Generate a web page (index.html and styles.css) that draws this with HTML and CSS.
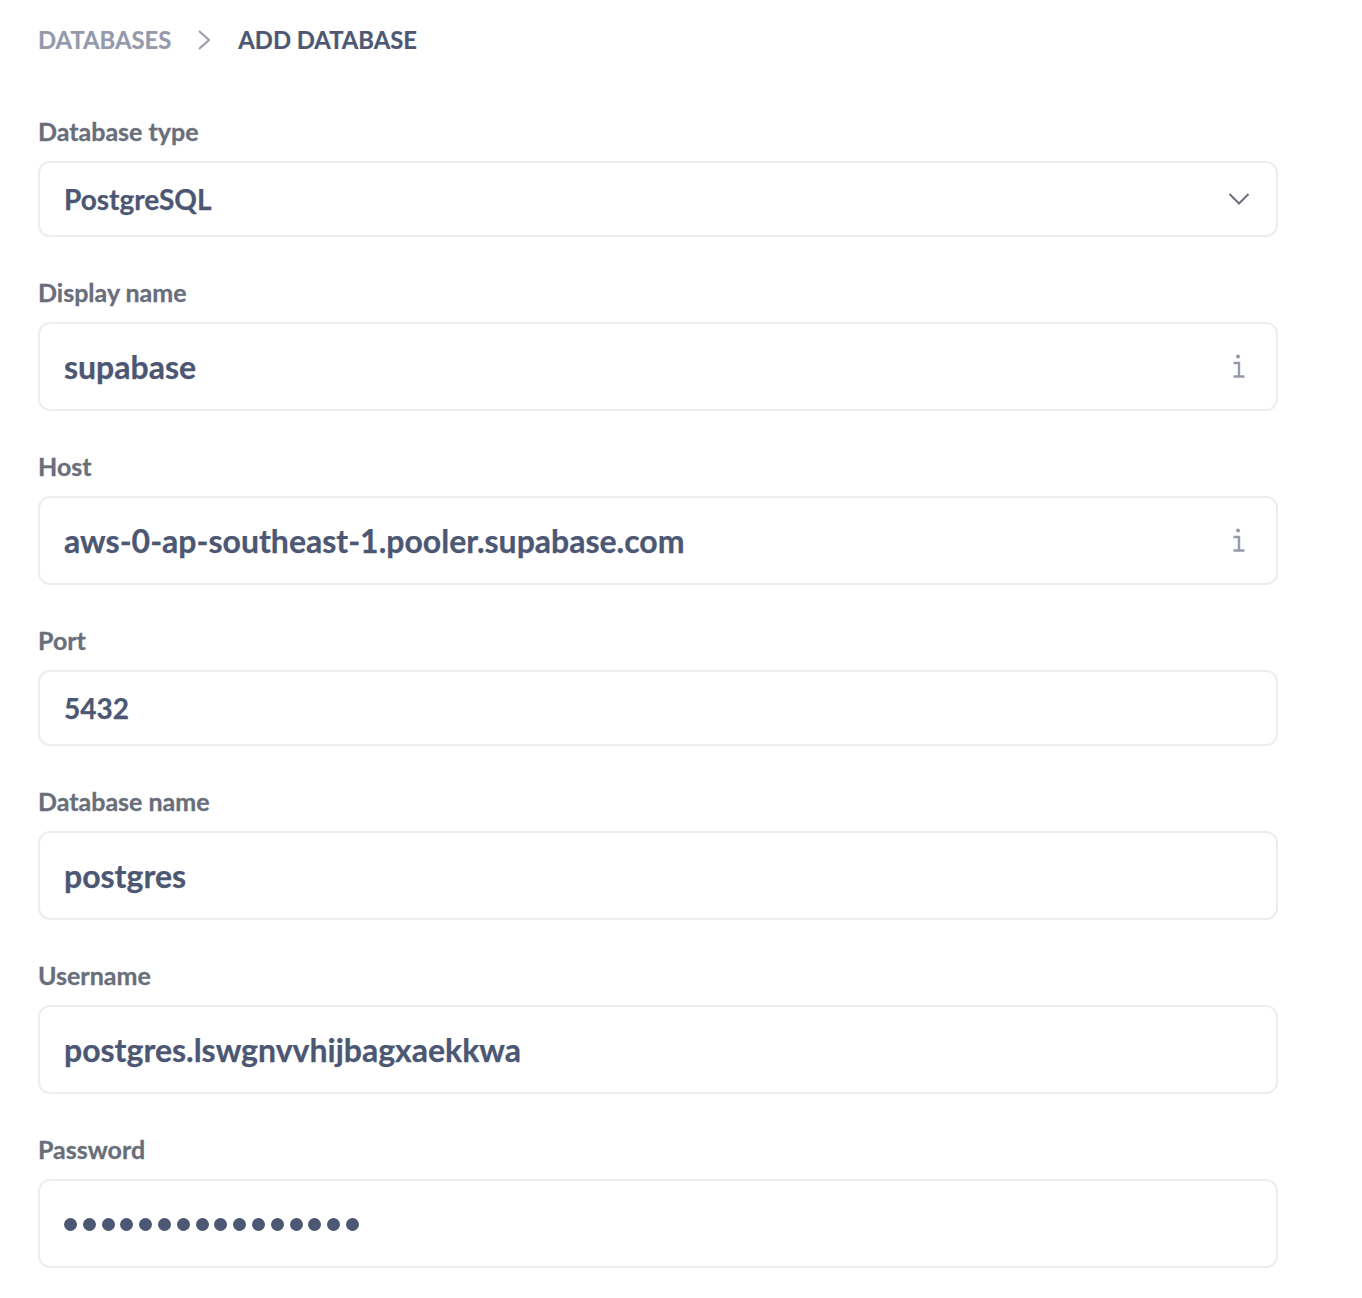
FILE: index.html
```html
<!DOCTYPE html>
<html>
<head>
<meta charset="utf-8">
<link rel="stylesheet" href="styles.css">
</head>
<body>
<div class="page">
  <nav class="crumbs">
    <span class="crumb-link">DATABASES</span>
    <svg class="crumb-sep" width="14" height="22" viewBox="0 0 14 22"><path d="M2 2 L12 11 L2 20" fill="none" stroke="#949aab" stroke-width="2"/></svg>
    <span class="crumb-current">ADD DATABASE</span>
  </nav>

  <form class="form">
    <div class="field">
      <div class="label">Database type</div>
      <div class="box short">
        <span class="value">PostgreSQL</span>
        <svg class="chevron" width="22" height="14" viewBox="0 0 22 14"><path d="M1.5 2 L11 11.5 L20.5 2" fill="none" stroke="#696e7b" stroke-width="2"/></svg>
      </div>
    </div>

    <div class="field">
      <div class="label">Display name</div>
      <div class="box tall">
        <span class="value big">supabase</span>
        <svg class="info" width="14" height="26" viewBox="0 0 14 26"><circle cx="6" cy="2.5" r="2" fill="#949aab"/><path d="M1.5 9 H7 V22 M1.5 22.5 H12.5" fill="none" stroke="#949aab" stroke-width="2.4"/></svg>
      </div>
    </div>

    <div class="field">
      <div class="label">Host</div>
      <div class="box tall">
        <span class="value big">aws-0-ap-southeast-1.pooler.supabase.com</span>
        <svg class="info" width="14" height="26" viewBox="0 0 14 26"><circle cx="6" cy="2.5" r="2" fill="#949aab"/><path d="M1.5 9 H7 V22 M1.5 22.5 H12.5" fill="none" stroke="#949aab" stroke-width="2.4"/></svg>
      </div>
    </div>

    <div class="field">
      <div class="label">Port</div>
      <div class="box short">
        <span class="value">5432</span>
      </div>
    </div>

    <div class="field">
      <div class="label">Database name</div>
      <div class="box tall">
        <span class="value big">postgres</span>
      </div>
    </div>

    <div class="field">
      <div class="label">Username</div>
      <div class="box tall">
        <span class="value big">postgres.lswgnvvhijbagxaekkwa</span>
      </div>
    </div>

    <div class="field">
      <div class="label">Password</div>
      <div class="box tall">
        <span class="dots"><i></i><i></i><i></i><i></i><i></i><i></i><i></i><i></i><i></i><i></i><i></i><i></i><i></i><i></i><i></i><i></i></span>
      </div>
    </div>
  </form>
</div>
</body>
</html>
```

FILE: styles.css
```css
html, body {
  margin: 0;
  padding: 0;
  background: #ffffff;
}

body {
  font-family: Lato, "Noto Sans", sans-serif;
  color: #4c5773;
}

.page {
  padding: 25px 0 0 38px;
  width: 1240px;
}

.crumbs {
  display: flex;
  align-items: center;
  height: 30px;
  font-size: 23.8px;
  font-weight: 700;
  -webkit-text-stroke: 0.2px currentColor;
}

.crumb-link {
  color: #949aab;
}

.crumb-sep {
  margin: 0 27px 0 26px;
}

.crumb-current {
  color: #4c5773;
}

.form {
  display: flex;
  flex-direction: column;
  margin-top: 62px;
}

.field {
  display: flex;
  flex-direction: column;
  margin-bottom: 41px;
}

.label {
  height: 30px;
  line-height: 28px;
  font-size: 25px;
  font-weight: 700;
  color: #696e7b;
  margin-bottom: 14px;
  -webkit-text-stroke: 0.3px currentColor;
}

.box {
  box-sizing: border-box;
  display: flex;
  align-items: center;
  justify-content: space-between;
  width: 1240px;
  border: 2px solid #eeecec;
  border-radius: 12px;
  padding: 0 26px 0 24px;
  background: #ffffff;
}

.box.short {
  height: 76px;
}

.box.tall {
  height: 89px;
}

.value {
  font-size: 28px;
  font-weight: 700;
  color: #4c5773;
  line-height: 1;
  -webkit-text-stroke: 0.25px currentColor;
}

.value.big {
  font-size: 32px;
}

.info {
  margin-right: 4px;
}

.dots {
  display: flex;
  gap: 5.8px;
  padding-top: 2px;
}

.dots i {
  display: block;
  width: 13px;
  height: 13px;
  border-radius: 50%;
  background: #4c5773;
}
```
